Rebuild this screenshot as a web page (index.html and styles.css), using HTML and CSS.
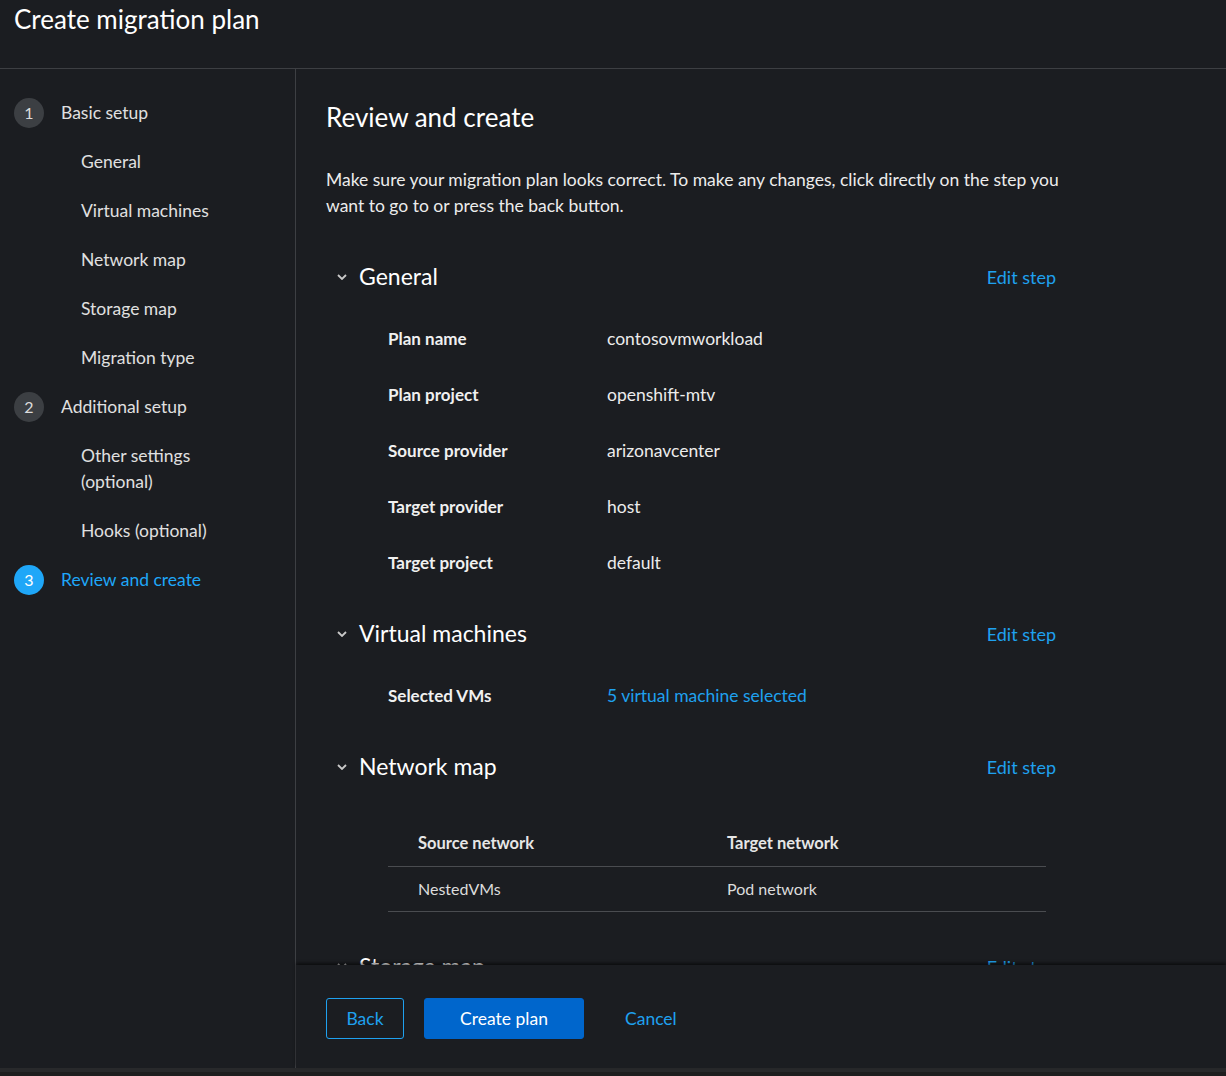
FILE: index.html
```html
<!DOCTYPE html>
<html lang="en">
<head>
<meta charset="utf-8">
<title>Create migration plan</title>
<link rel="stylesheet" href="styles.css">
</head>
<body>
<div class="page">
  <header class="page-header">
    <h1 class="page-title">Create migration plan</h1>
  </header>
  <div class="wizard">
    <nav class="wizard-nav">
      <ol class="nav-list">
        <li class="nav-step">
          <span class="step-num">1</span><span class="step-label">Basic setup</span>
        </li>
        <li class="nav-sub">General</li>
        <li class="nav-sub">Virtual machines</li>
        <li class="nav-sub">Network map</li>
        <li class="nav-sub">Storage map</li>
        <li class="nav-sub">Migration type</li>
        <li class="nav-step">
          <span class="step-num">2</span><span class="step-label">Additional setup</span>
        </li>
        <li class="nav-sub">Other settings (optional)</li>
        <li class="nav-sub">Hooks (optional)</li>
        <li class="nav-step nav-current">
          <span class="step-num">3</span><span class="step-label">Review and create</span>
        </li>
      </ol>
    </nav>
    <main class="wizard-main">
      <div class="wizard-content">
        <h2 class="content-title">Review and create</h2>
        <p class="intro">Make sure your migration plan looks correct. To make any changes, click directly on the step you want to go to or press the back button.</p>

        <section class="review-section">
          <div class="section-head">
            <svg class="chev" viewBox="0 0 10 6" width="10" height="6"><path d="M1 1 L5 5 L9 1" fill="none" stroke="currentColor" stroke-width="1.8"/></svg>
            <h3 class="section-title">General</h3>
            <a class="edit-link">Edit step</a>
          </div>
          <dl class="desc-list">
            <div class="desc-row"><dt>Plan name</dt><dd>contosovmworkload</dd></div>
            <div class="desc-row"><dt>Plan project</dt><dd>openshift-mtv</dd></div>
            <div class="desc-row"><dt>Source provider</dt><dd>arizonavcenter</dd></div>
            <div class="desc-row"><dt>Target provider</dt><dd>host</dd></div>
            <div class="desc-row"><dt>Target project</dt><dd>default</dd></div>
          </dl>
        </section>

        <section class="review-section">
          <div class="section-head">
            <svg class="chev" viewBox="0 0 10 6" width="10" height="6"><path d="M1 1 L5 5 L9 1" fill="none" stroke="currentColor" stroke-width="1.8"/></svg>
            <h3 class="section-title">Virtual machines</h3>
            <a class="edit-link">Edit step</a>
          </div>
          <dl class="desc-list">
            <div class="desc-row"><dt>Selected VMs</dt><dd><a class="value-link">5 virtual machine selected</a></dd></div>
          </dl>
        </section>

        <section class="review-section">
          <div class="section-head">
            <svg class="chev" viewBox="0 0 10 6" width="10" height="6"><path d="M1 1 L5 5 L9 1" fill="none" stroke="currentColor" stroke-width="1.8"/></svg>
            <h3 class="section-title">Network map</h3>
            <a class="edit-link">Edit step</a>
          </div>
          <table class="map-table">
            <colgroup><col class="col-source"><col class="col-target"></colgroup>
            <thead>
              <tr><th>Source network</th><th>Target network</th></tr>
            </thead>
            <tbody>
              <tr><td>NestedVMs</td><td>Pod network</td></tr>
            </tbody>
          </table>
        </section>

        <section class="review-section">
          <div class="section-head">
            <svg class="chev" viewBox="0 0 10 6" width="10" height="6"><path d="M1 1 L5 5 L9 1" fill="none" stroke="currentColor" stroke-width="1.8"/></svg>
            <h3 class="section-title">Storage map</h3>
            <a class="edit-link">Edit step</a>
          </div>
        </section>
      </div>
      <footer class="wizard-footer">
        <button class="btn btn-secondary">Back</button>
        <button class="btn btn-primary">Create plan</button>
        <button class="btn btn-link">Cancel</button>
      </footer>
    </main>
  </div>
  <div class="bottom-bar"></div>
</div>
</body>
</html>
```

FILE: styles.css
```css
* { box-sizing: border-box; }

html, body {
  margin: 0;
  padding: 0;
  height: 100%;
  background: #1b1d21;
  overflow: hidden;
}

body {
  font-family: "Lato", "Noto Sans", sans-serif;
  color: #e0e0e0;
  font-size: 17.5px;
  line-height: 26px;
}

.page {
  display: flex;
  flex-direction: column;
  height: 1076px;
}

.page-header {
  height: 69px;
  flex: none;
  border-bottom: 1px solid #3d3f43;
  padding: 4px 14px 0;
}

.page-title {
  margin: 0;
  font-size: 26px;
  line-height: 30px;
  font-weight: 400;
  color: #ffffff;
}

.wizard {
  flex: 1;
  display: flex;
  min-height: 0;
}

.wizard-nav {
  width: 296px;
  flex: none;
  border-right: 1px solid #3d3f43;
  padding-top: 19px;
}

.nav-list {
  list-style: none;
  margin: 0;
  padding: 0 0 0 14px;
}

.nav-step {
  display: flex;
  align-items: center;
  gap: 17px;
  height: 49px;
  color: #e0e0e0;
}

.step-num {
  width: 30px;
  height: 30px;
  border-radius: 50%;
  background: #3c3f43;
  color: #dcdcdc;
  font-size: 16px;
  display: flex;
  align-items: center;
  justify-content: center;
  flex: none;
}

.nav-sub {
  padding: 11.5px 0 11.5px 67px;
  max-width: 236px;
  color: #e0e0e0;
}

.nav-current .step-num {
  background: #1fa7f8;
  color: #ffffff;
}

.nav-current .step-label {
  color: #1fa7f8;
}

.wizard-main {
  flex: 1;
  display: flex;
  flex-direction: column;
  min-width: 0;
}

.wizard-content {
  flex: 1;
  overflow: hidden;
  padding: 31px 0 0 30px;
  width: 778px;
}

.content-title {
  margin: 0;
  font-size: 26px;
  line-height: 34px;
  font-weight: 400;
  color: #ffffff;
}

.intro {
  margin: 33px 0 42px;
  color: #ececec;
}

.review-section {
  margin-top: 27px;
  width: 730px;
}

.section-head {
  display: flex;
  align-items: center;
  height: 30px;
  padding-left: 11px;
}

.chev {
  color: #c9c9c9;
  flex: none;
  margin-right: 12px;
  margin-top: 1px;
}

.section-title {
  margin: 0;
  font-size: 23px;
  line-height: 30px;
  font-weight: 400;
  color: #ffffff;
  flex: 1;
}

.edit-link {
  color: #1fa1ef;
  font-size: 18px;
  margin-top: 2px;
}

.desc-list {
  margin: 20px 0 0;
  padding-left: 62px;
}

.desc-row {
  display: flex;
  height: 56px;
  align-items: center;
}

.desc-row dt {
  width: 219px;
  flex: none;
  font-weight: 700;
  font-size: 17px;
  color: #f0f0f0;
}

.desc-row dd {
  margin: 0;
  color: #ececec;
}

.value-link {
  color: #1fa1ef;
}

.map-table {
  margin: 39px 0 39px 62px;
  width: 658px;
  table-layout: fixed;
  border-collapse: collapse;
  font-size: 16px;
}

.col-source {
  width: 309px;
}

.map-table th {
  text-align: left;
  font-weight: 700;
  font-size: 16.5px;
  color: #e6e6e6;
  height: 46px;
  padding: 0 0 0 30px;
  border-bottom: 1px solid #4a4c50;
}

.map-table td {
  height: 45px;
  padding: 0 0 0 30px;
  color: #dcdcdc;
  border-bottom: 1px solid #4a4c50;
}

.wizard-footer {
  flex: none;
  height: 103px;
  display: flex;
  align-items: flex-start;
  padding: 33px 0 0 30px;
  gap: 20px;
  background: #1b1d21;
  box-shadow: 0 -2px 3px rgba(0, 0, 0, 0.55);
  position: relative;
}

.btn {
  font-family: inherit;
  font-size: 17.5px;
  line-height: 24px;
  height: 41px;
  border-radius: 3px;
  padding: 0 19px;
  cursor: pointer;
}

.btn-secondary {
  background: transparent;
  border: 1px solid #1fa1ef;
  color: #1fa1ef;
  width: 78px;
}

.btn-primary {
  background: #0066cc;
  border: 1px solid #0066cc;
  color: #ffffff;
  width: 160px;
}

.btn-link {
  background: transparent;
  border: none;
  color: #1fa1ef;
  padding: 0 21px;
}

.bottom-bar {
  flex: none;
  height: 8px;
  background: linear-gradient(#28292b 0 4px, #1e1e1f 4px);
}
```
